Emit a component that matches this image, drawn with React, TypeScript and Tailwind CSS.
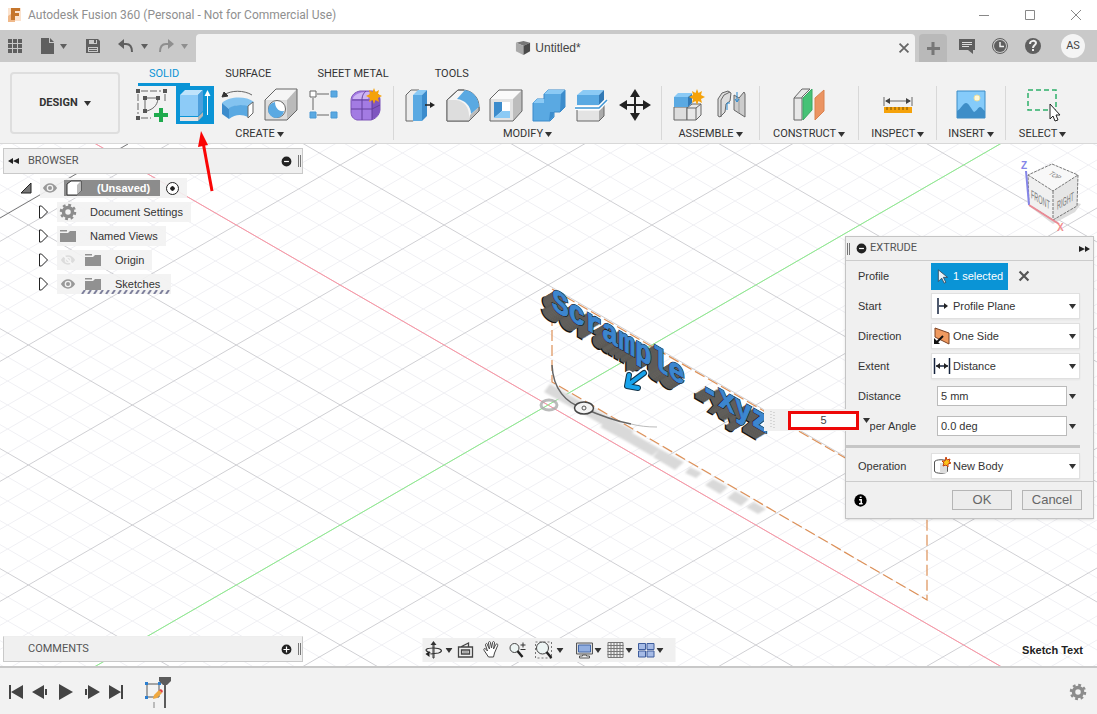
import type { ReactNode } from "react";

type IconProps = { children: ReactNode; size?: number; className?: string };

function Tool({ children }: { children: ReactNode }) {
  return (
    <svg viewBox="0 0 38 38" className="size-[38px]" fill="none" stroke="#666" strokeWidth="1">
      {children}
    </svg>
  );
}

function Glyph({ children, size = 18, className = "" }: IconProps) {
  return (
    <svg viewBox="0 0 18 18" width={size} height={size} className={`shrink-0 ${className}`} fill="none">
      {children}
    </svg>
  );
}

function Caret({ className = "text-[#333]" }: { className?: string }) {
  return (
    <svg viewBox="0 0 7 5" className={`h-[5px] w-[7px] shrink-0 ${className}`}>
      <path d="M0 0h7L3.5 5z" fill="currentColor" />
    </svg>
  );
}

const Spark = ({ x, y }: { x: number; y: number }) => (
  <path
    transform={`translate(${x} ${y})`}
    d="M0-8 1.5-4 5-6 4-2 8 0 4 2 5 6 1.5 4 0 8-1.5 4-5 6-4 2-8 0-4-2-5-6-1.5-4z"
    fill="#f5a20a"
    stroke="none"
  />
);

const createTools = [
  {
    name: "Create Sketch",
    icon: (
      <Tool>
        <path d="M8 5h20M5 8v20M32 8v9M8 32h10" strokeDasharray="7 2" />
        <path d="M13 12h10M12 13v11M25 13c-1 7-5 10-11 12" />
        <path d="M3 3h4v4H3zM30 3h4v4h-4zM3 30h4v4H3zM10 10h4v4h-4zM23 10h4v4h-4zM10 23h4v4h-4z" fill="#555" stroke="none" />
        <path d="M26 22h4v5h5v4h-5v5h-4v-5h-5v-4h5z" fill="#1faa4d" stroke="none" />
      </Tool>
    ),
  },
  {
    name: "Extrude",
    active: true,
    icon: (
      <Tool>
        <path d="M4 9l5-5h18l-5 5z" fill="#bfe3fb" stroke="none" />
        <path d="M4 9h18v21H4z" fill="#8dcbf7" stroke="none" />
        <path d="M22 9l5-5v21l-5 5z" fill="#4e9fdc" stroke="none" />
        <path d="M4 31h18v4H4z" fill="#e6e6e6" stroke="none" />
        <path d="M22 31l5-5v4l-5 5z" fill="#b5b5b5" stroke="none" />
        <path d="M31.500 29V6" stroke="#fff" />
        <path d="M28.500 10l3-6 3 6z" fill="#fff" stroke="none" />
      </Tool>
    ),
  },
  {
    name: "Revolve",
    icon: (
      <Tool>
        <path d="M5 9C12 4 25 4 33 9" />
        <path d="M3 11l2-5 4 4z" fill="#333" stroke="#333" />
        <path d="M3 17c8-7 24-7 32-1l-6 5c-7-3-14-2-19 2z" fill="#83c3f0" stroke="none" />
        <path d="M10 22c5-3 12-4 19-2v11c-6-3-13-3-19 2z" fill="#5aa9e2" stroke="none" />
        <path d="M3 17l7 6v10l-7-5z" fill="#3c8ccc" stroke="none" />
        <path d="M29 20l5-4v11l-5 5z" fill="#fff" />
      </Tool>
    ),
  },
  {
    name: "Hole",
    icon: (
      <Tool>
        <path d="M3 14L14 3h21L25 14z" fill="#f5f5f5" stroke="none" />
        <path d="M25 14L35 3v21L25 34z" fill="#bababa" stroke="none" />
        <path d="M3 14h22v20H3z" fill="#ddd" stroke="none" />
        <path d="M3 14L14 3h21v21L25 34H3z" />
        <circle cx="15" cy="23" r="8.500" fill="#fff" />
        <path d="M13 16a8 8 0 1 0 9 9c-5 1-9-3-9-9z" fill="#5aa9e2" stroke="none" />
      </Tool>
    ),
  },
  {
    name: "Rectangular Pattern",
    icon: (
      <Tool>
        <path d="M12 8h12M8 12v12M12 29h12" />
        <path d="M5 5h6v6H5z" fill="#fff" />
        <path d="M26 5h6v6h-6zM5 26h6v6H5zM26 26h6v6h-6z" fill="#5aa9e2" stroke="#4b99d4" />
      </Tool>
    ),
  },
  {
    name: "Create Form",
    icon: (
      <Tool>
        <path d="M3 15c0-6 4-9 9-10h12c5 1 8 4 8 9v10c-1 6-5 9-9 10H9c-4-1-6-4-6-8z" fill="#a37be3" stroke="#7d54b8" />
        <path d="M5 12c3-5 8-6 17-6l-2 7H5z" fill="#cdb4f4" stroke="none" />
        <path d="M24 13c3-1 5-2 8-2v13c-1 5-4 8-8 9z" fill="#7f55c0" stroke="none" />
        <path d="M3 23h21l8-4M14 34V14c0-5 2-7 4-9M4 14h20v20" stroke="#633f9c" />
        <Spark x={26} y={10} />
      </Tool>
    ),
  },
];

const modifyTools = [
  {
    name: "Press Pull",
    icon: (
      <Tool>
        <path d="M5 9l5-5h8v26l-6 5H5z" fill="#ececec" />
        <path d="M12 10l6-6v26l-6 5z" fill="#fff" stroke="none" />
        <path d="M12 9h9v26h-9z" fill="#5aa9e2" stroke="none" />
        <path d="M12 9l5-5h9l-5 5z" fill="#8bcaf5" stroke="none" />
        <path d="M21 9l5-5v26l-5 5z" fill="#3c8ccc" stroke="none" />
        <path d="M24 19h6" stroke="#222" strokeWidth="1.500" />
        <path d="M29 16l5 3-5 3z" fill="#222" stroke="none" />
      </Tool>
    ),
  },
  {
    name: "Fillet",
    icon: (
      <Tool>
        <path d="M3 14L14 4h6c9 1 15 8 15 17v4L25 35H3z" fill="#f5f5f5" />
        <path d="M3 14h9c8 1 13 7 13 16v5H3z" fill="#ddd" stroke="none" />
        <path d="M13 13l8-9c8 1 14 8 14 17l-8 7c0-8-6-14-14-15z" fill="#5aa9e2" stroke="none" />
        <path d="M26 29l9-8v4L25 35z" fill="#bbb" stroke="none" />
        <path d="M3 14L14 4h6M35 21v4L25 35H3V14" />
      </Tool>
    ),
  },
  {
    name: "Shell",
    icon: (
      <Tool>
        <path d="M3 13l9-9h23l-9 9z" fill="#fafafa" stroke="none" />
        <path d="M26 13l9-9v21L26 35z" fill="#bdbdbd" stroke="none" />
        <path d="M3 13h23v22H3z" fill="#e3e3e3" stroke="none" />
        <path d="M3 13l9-9h23v21l-9 10H3z" />
        <path d="M7 16h16v16H7z" fill="#fff" stroke="none" />
        <path d="M7 16h8v9l-8 7z" fill="#3c8ccc" stroke="none" />
        <path d="M15 25h8v7H7z" fill="#8bcaf5" stroke="none" />
      </Tool>
    ),
  },
  {
    name: "Combine",
    icon: (
      <Tool>
        <path d="M3 17l4-4h7V8l4-4h17v17l-5 5h-6v5l-4 4H3z" fill="#5aa9e2" stroke="#3b8aca" />
        <path d="M14 8l4-4h17l-4 4zM3 17l4-4h7v4z" fill="#8bcaf5" stroke="none" />
        <path d="M31 8l4-4v17l-5 5zM20 26h4l-1 5-4 4z" fill="#3c8ccc" stroke="none" />
      </Tool>
    ),
  },
  {
    name: "Split Body",
    icon: (
      <Tool>
        <path d="M4 9l6-5h21l-5 5z" fill="#8bcaf5" stroke="none" />
        <path d="M4 9h22v10H4z" fill="#5aa9e2" stroke="none" />
        <path d="M26 9l5-5v10l-5 5z" fill="#3279b5" stroke="none" />
        <path d="M4 25h22v10H4z" fill="#e3e3e3" stroke="none" />
        <path d="M26 25l5-5v10l-5 5z" fill="#aaa" stroke="none" />
        <path d="M4 24v11h22l5-5V19" />
        <path d="M2 22h24l8-8" stroke="#fff" strokeWidth="4" />
        <path d="M2 22h24l8-8" stroke="#3e95d4" strokeWidth="1.500" />
      </Tool>
    ),
  },
  {
    name: "Move",
    icon: (
      <Tool>
        <path d="M19 8v22M8 19h22" stroke="#222" strokeWidth="2" />
        <path d="M19 3l5 8H14zM19 35l5-8H14zM3 19l8-5v10zM35 19l-8-5v10z" fill="#222" stroke="none" />
      </Tool>
    ),
  },
];

const assembleTools = [
  {
    name: "New Component",
    icon: (
      <Tool>
        <path d="M4 21h13v13H4z" fill="#ddd" />
        <path d="M17 22l5-4h9v11l-5 5h-9z" fill="#e8e8e8" />
        <path d="M17 22h9v12M26 22l5-4" />
        <path d="M4 11l4-4h14v10l-5 4H4z" fill="#8bcaf5" stroke="none" />
        <path d="M4 11h14v10H4z" fill="#5aa9e2" stroke="none" />
        <path d="M18 11l4-3v9l-4 4z" fill="#3279b5" stroke="none" />
        <Spark x={27} y={11} />
      </Tool>
    ),
  },
  {
    name: "Joint",
    icon: (
      <Tool>
        <path d="M5 13l4-6 6-2 3 2-1 8-4 3-1 8-5 5-2-1z" fill="#ddd" />
        <path d="M8 31V14l3-5 6-3" />
        <path d="M21 9l5 3 5-6 1 2v23l-11-7z" fill="#ccc" />
        <path d="M26 12v15" stroke="#999" />
        <path d="M14 24v-7h3M24 6v9M22 13l2 3 2-3" stroke="#2787cf" />
      </Tool>
    ),
  },
];

const constructTools = [
  {
    name: "Offset Plane",
    icon: (
      <Tool>
        <path d="M4 12l8-9h8l-8 8v23H4z" fill="#e8e8e8" />
        <path d="M4 12h8" />
        <path d="M13 12l9-9v21l-9 10z" fill="#46c276" stroke="#39a862" />
        <path d="M25 12l9-8v21l-9 9z" fill="#eb9462" stroke="#d9824f" />
      </Tool>
    ),
  },
];

const inspectTools = [
  {
    name: "Measure",
    icon: (
      <Tool>
        <path d="M5 11v9M33 11v9M7 15h24" />
        <path d="M6 15l5-3v6zM32 15l-5-3v6z" fill="#444" stroke="none" />
        <path d="M5 21h28v6H5z" fill="#f5a20a" stroke="none" />
        <path d="M8 21v3M12 21v3M16 21v3M20 21v3M24 21v3M28 21v3" stroke="#7a5300" />
      </Tool>
    ),
  },
];

const insertTools = [
  {
    name: "Insert Image",
    icon: (
      <Tool>
        <path d="M5 5h28v27H5z" fill="#85cbfa" stroke="#3d8cc5" />
        <path d="M5 25c4-2 6-8 9-8s5 6 8 9c3-1 4-5 6-5s3 3 5 4v7H5z" fill="#3e8ec8" stroke="none" />
        <circle cx="25" cy="12" r="3" fill="#fff8d8" stroke="#e9dfa0" />
      </Tool>
    ),
  },
];

const selectTools = [
  {
    name: "Select",
    icon: (
      <Tool>
        <path d="M4 4h28v20H4z" stroke="#2eb06a" strokeDasharray="5 3" strokeWidth="1.500" />
        <path d="M26 18v15l3-3 2 5 3-1-2-5h4z" fill="#fff" stroke="#222" />
      </Tool>
    ),
  },
];

const groups = [
  { label: "CREATE", tools: createTools, pad: "px-[7px]" },
  { label: "MODIFY", tools: modifyTools, pad: "px-[7px]" },
  { label: "ASSEMBLE", tools: assembleTools, pad: "px-2" },
  { label: "CONSTRUCT", tools: constructTools, pad: "px-[13px]" },
  { label: "INSPECT", tools: inspectTools, pad: "px-[12px]" },
  { label: "INSERT", tools: insertTools, pad: "px-[11px]" },
  { label: "SELECT", tools: selectTools, pad: "px-[13px]" },
];

function TitleBar() {
  return (
    <header className="flex h-[30px] items-center bg-white pl-[7px]">
      <svg viewBox="0 0 16 16" className="size-4">
        <path d="M1 1h13v13H1z" fill="#fbe3cf" />
        <path d="M4 1h9v3H8v2h4v3H8v4H4z" fill="#c5752b" />
        <path d="M1 9l3-2v6h4v2H1z" fill="#f0b98a" />
      </svg>
      <h1 className="ml-[5px] flex-1 font-['Roboto',sans-serif] text-[12px] text-[#8f8f8f]">
        Autodesk Fusion 360 (Personal - Not for Commercial Use)
      </h1>
      <div className="flex gap-[28px] pr-3">
        <button aria-label="Minimize">
          <Glyph><path d="M4 9.500h10" stroke="#888" /></Glyph>
        </button>
        <button aria-label="Maximize">
          <Glyph><path d="M4.500 4.500h9v9h-9z" stroke="#888" /></Glyph>
        </button>
        <button aria-label="Close">
          <Glyph><path d="M4 4l10 10M14 4L4 14" stroke="#888" /></Glyph>
        </button>
      </div>
    </header>
  );
}

function DocumentBar() {
  return (
    <div className="flex h-8 bg-[#c9c9c9] text-[#5f5f5f]">
      <div className="flex w-[196px] shrink-0 items-center pl-[6px]">
        <button aria-label="Data panel">
          <Glyph>
            <path
              d="M2 2h4v4H2zM7 2h4v4H7zM12 2h4v4h-4zM2 7h4v4H2zM7 7h4v4H7zM12 7h4v4h-4zM2 12h4v4H2zM7 12h4v4H7zM12 12h4v4h-4z"
              fill="currentColor"
            />
          </Glyph>
        </button>
        <button aria-label="File" className="ml-[14px] flex items-center gap-1">
          <Glyph><path d="M3 1h8v5h5v11H3zM12 1l4 4h-4z" fill="currentColor" /></Glyph>
          <Caret className="text-[#5f5f5f]" />
        </button>
        <button aria-label="Save" className="ml-[17px]">
          <Glyph>
            <path d="M2 2h12l2 2v12H2zM5 3v4h8V3zM4 10v5h10v-5z" fillRule="evenodd" fill="currentColor" />
            <path d="M10 3h2v3h-2zM5 11h8v1H5zM5 13h8v1H5z" fill="currentColor" />
          </Glyph>
        </button>
        <button aria-label="Undo" className="ml-[15px] flex items-center gap-[6px]">
          <Glyph>
            <path d="M5 7h4c4 0 6 3 6 8" stroke="currentColor" strokeWidth="2" />
            <path d="M7 2v10L1 7z" fill="currentColor" />
          </Glyph>
          <Caret className="text-[#5f5f5f]" />
        </button>
        <button aria-label="Redo" className="ml-[9px] flex items-center gap-[6px] text-[#8f8f8f]">
          <Glyph>
            <path d="M13 7H9c-4 0-6 3-6 8" stroke="currentColor" strokeWidth="2" />
            <path d="M11 2v10l6-5z" fill="currentColor" />
          </Glyph>
          <Caret className="text-[#8f8f8f]" />
        </button>
      </div>
      <div className="mt-1 flex min-w-0 flex-1 items-center rounded-t bg-[#f2f2f2] pr-[3px]">
        <div className="flex flex-1 items-center justify-center gap-1 pl-1 text-xs text-[#444]">
          <svg viewBox="0 0 17 17" className="size-4">
            <path d="M1 3l8-2 7 2-7 3z" fill="#777" />
            <path d="M1 3l8 3v10l-8-4z" fill="#aaa" />
            <path d="M16 3L9 6v10l7-4z" fill="#4a4a4a" />
          </svg>
          Untitled*
        </div>
        <button aria-label="Close tab">
          <Glyph size={16}><path d="M4 4l10 10M14 4L4 14" stroke="#666" strokeWidth="2" /></Glyph>
        </button>
      </div>
      <div className="flex w-[182px] shrink-0 items-center">
        <button aria-label="New tab" className="mt-1 ml-1 flex h-7 w-7 items-center justify-center rounded-t bg-[#b9b9b9]">
          <Glyph><path d="M9 3v13M3 9.500h13" stroke="#777" strokeWidth="3" /></Glyph>
        </button>
        <button aria-label="Comments" className="ml-[11px]">
          <Glyph>
            <path d="M1 2h16v11h-2v4l-5-4H1z" fill="currentColor" />
            <path d="M4 5.500h10M4 7.500h10M4 9.500h7" stroke="#ddd" />
          </Glyph>
        </button>
        <button aria-label="Job status" className="ml-[15px]">
          <Glyph>
            <circle cx="9" cy="9" r="7.500" stroke="currentColor" />
            <circle cx="9" cy="9" r="6" fill="currentColor" />
            <path d="M9 5v4.500h4" stroke="#eee" strokeWidth="1.500" />
          </Glyph>
        </button>
        <button aria-label="Help" className="ml-[15px]">
          <Glyph>
            <circle cx="9" cy="9" r="8" fill="currentColor" />
            <path d="M6 7c0-4 6-4 6-1 0 2-3 2-3 5" stroke="#eee" strokeWidth="2" />
            <path d="M8 12h2v2H8z" fill="#eee" />
          </Glyph>
        </button>
        <button className="ml-[19px] size-6 rounded-full bg-[#f4f4f4] font-['Roboto',sans-serif] text-[11px] text-[#444]">
          AS
        </button>
      </div>
    </div>
  );
}

function Ribbon() {
  return (
    <div className="flex h-[82px] border-b border-[#d8d8d8] bg-[#f2f2f2] font-['Roboto',sans-serif] text-[11px] text-[#333]">
      <div className="w-[126px] shrink-0 pt-[10px] pl-[10px]">
        <button className="flex h-[62px] w-[110px] items-center justify-center gap-[6px] rounded border-2 border-[#dedede] font-bold">
          DESIGN <Caret />
        </button>
      </div>
      <div className="min-w-0 flex-1">
        <nav className="flex h-6 gap-6 pl-3">
          <a href="#solid" className="border-b-3 border-[#0a94d6] px-[11px] leading-6 text-[#0a94d6]">SOLID</a>
          <a href="#surface" className="px-[11px] leading-6">SURFACE</a>
          <a href="#sheet-metal" className="px-[11px] leading-6">SHEET METAL</a>
          <a href="#tools" className="px-[11px] leading-6">TOOLS</a>
        </nav>
        <div className="flex">
          {groups.map((group) => (
            <div
              key={group.label}
              className={`flex h-[54px] shrink-0 flex-col items-center border-r border-[#d8d8d8] last:border-r-0 ${group.pad}`}
            >
              <div className="flex gap-[5px]">
                {group.tools.map((tool) => (
                  <button
                    key={tool.name}
                    aria-label={tool.name}
                    className={"active" in tool && tool.active ? "bg-[#0a94d6]" : ""}
                  >
                    {tool.icon}
                  </button>
                ))}
              </div>
              <button className="mt-[2px] flex items-center gap-[2px] leading-4">
                {group.label} <Caret />
              </button>
            </div>
          ))}
        </div>
      </div>
    </div>
  );
}

// Isometric floor grid: both families of lines share one slope around the origin.
const SLOPE = 0.5774;
const ORIGIN = { x: 548, y: 405 };
const steps = Array.from({ length: 69 }, (_, i) => i - 34).sort(
  (a, b) => Number(a % 5 === 0) - Number(b % 5 === 0),
);

function gridLine(k: number, dir: number) {
  const y = (x: number) => ORIGIN.y + dir * SLOPE * (x - ORIGIN.x) + 24 * k;
  return `M0 ${y(0)}L1097 ${y(1097)}`;
}

function Viewport() {
  return (
    <svg viewBox="0 144 1097 522" preserveAspectRatio="xMidYMid slice" className="absolute inset-0 h-full w-full" fill="none">
      {steps.map((k) => (
        <path key={k} d={gridLine(k, 1) + gridLine(k, -1)} stroke={k % 5 === 0 ? "#d0d0d4" : "#f0f0f4"} />
      ))}
      <path d="M0 218L128 144" stroke="#777" />
      <path d={gridLine(0, 1)} stroke="#ff93a3" />
      <path d={gridLine(0, -1)} stroke="#8cf08c" />

      <defs>
        <filter id="soft"><feGaussianBlur stdDeviation="1" /></filter>
        <text
          id="solid-text"
          transform="matrix(.866 .5 0 1 552 309)"
          fontFamily="Liberation Mono, monospace"
          fontWeight="bold"
          fontSize="32"
        >
          Scrample -xyz
        </text>
      </defs>

      <g filter="url(#soft)" fill="#d9d9d9">
        <path d="M550 384l84 47-8 7-82-46z" />
        <path d="M608 420l26 14-8 7-26-14zM634 434l26 15-8 7-26-15zM660 449l24 13-9 8-22-13zM690 467l12 6-6 5-11-5zM713 479l15 8-8 7-15-9zM735 491l14 8-8 7-14-8zM754 502l12 7-8 5-12-7z" />
      </g>
      <ellipse cx="549" cy="405" rx="8" ry="5" stroke="#aaa" strokeWidth="3" opacity=".8" />

      <g stroke="#dd9057" strokeWidth="1.200" strokeDasharray="11 4">
        <path d="M552 289L927 505M552 300V382L927 600V505" />
      </g>

      {Array.from({ length: 12 }, (_, i) => (
        <use
          key={i}
          href="#solid-text"
          x={i - 11}
          y={(11 - i) * 0.6}
          fill="#6c6a66"
          stroke={i === 0 || i === 11 ? "#151515" : "#5a5854"}
          strokeWidth={i === 0 || i === 11 ? 2 : 1}
        />
      ))}
      <use href="#solid-text" fill="#3c86cf" stroke="#3c86cf" strokeWidth="1" />

      <path d="M552 365c1 24 14 38 31 43 16 7 32 13 48 16" stroke="#666" strokeWidth="1.500" />
      <path d="M631 424c8 2 16 3 26 3" stroke="#bbb" />
      <ellipse cx="584" cy="408" rx="9.500" ry="6" fill="#f3f3f3" stroke="#444" strokeWidth="1.500" />
      <circle cx="584" cy="408" r="2" stroke="#555" />
      <g strokeLinecap="round" strokeLinejoin="round">
        <path d="M644 373l-16 12M629 375l-2 11 11 2" stroke="#fff" strokeWidth="9" />
        <path d="M644 373l-16 12M629 375l-2 11 11 2" stroke="#11344a" strokeWidth="6" />
        <path d="M644 373l-16 12M629 375l-2 11 11 2" stroke="#17a3ec" strokeWidth="4" />
      </g>
    </svg>
  );
}

function ViewCube() {
  return (
    <svg viewBox="1012 154 77 78" className="absolute top-2.5 right-2 h-[78px] w-[77px]" fontFamily="Liberation Sans, sans-serif">
      <path d="M1029 206l24 18 22-12 6-8-28-8z" fill="#ddd" />
      <path d="M1052 164l26 11-25 16-25-16z" fill="#f8f8f8" />
      <path d="M1028 175l25 16v29l-24-15z" fill="#f0f0f0" />
      <path d="M1078 175l-25 16v29l24-14z" fill="#e6e6e6" />
      <path d="M1052 164l26 11-1 31-24 14-24-15-1-30zM1028 175l25 16 25-16M1053 191v29" fill="none" stroke="#777" strokeDasharray="3 1" />
      <path d="M1026 171l3 34" stroke="#8585e8" strokeWidth="2" />
      <path d="M1029 205l30 19" stroke="#ea8a95" strokeWidth="2" />
      <text x="1021" y="169" fontSize="10" fontWeight="bold" fill="#8585e8">Z</text>
      <text x="1057" y="231" fontSize="10" fontWeight="bold" fill="#f28d8d">X</text>
      <g fontSize="8" fill="#777">
        <text transform="matrix(.68 .42 0 1.500 1031 198)">FRONT</text>
        <text transform="matrix(.68 -.4 0 1.500 1057 210)">RIGHT</text>
        <text transform="matrix(.6 .35 -.8 .5 1048 174)">TOP</text>
      </g>
    </svg>
  );
}

function Eye({ off = false }: { off?: boolean }) {
  return (
    <Glyph size={16} className={off ? "opacity-25" : ""}>
      <path d="M1 9c4-7 12-7 16 0-4 7-12 7-16 0z" fill="#999" />
      <circle cx="9" cy="9" r="3" stroke="#f2f2f2" strokeWidth="1.500" />
      {off && <path d="M3 3l12 12" stroke="#fff" strokeWidth="2" />}
    </Glyph>
  );
}

const Folder = () => (
  <Glyph><path d="M1 3h7v1.500H1zM1 6h8l2-2h6v11H1z" fill="#919191" /></Glyph>
);

const Gear = () => (
  <Glyph>
    <circle cx="9" cy="9" r="4.500" stroke="#8c8c8c" strokeWidth="3.500" />
    <circle cx="9" cy="9" r="7" stroke="#8c8c8c" strokeWidth="2.500" strokeDasharray="2.800 2.700" />
  </Glyph>
);

const Expander = () => (
  <button aria-label="Expand" className="mr-[8px]">
    <svg viewBox="0 0 11 14" className="h-[14px] w-[11px]">
      <path d="M1.500 1h2l6 6-6 6h-2z" fill="#fff" stroke="#222" />
    </svg>
  </button>
);

function Browser() {
  return (
    <section className="absolute top-1 left-[3px] w-[300px] text-[11px] text-[#333]">
      <div className="flex h-[26px] items-center border border-[#c9c9c9] bg-[#f0f0f0] pr-px pl-1 font-['Roboto',sans-serif] text-[#555]">
        <button aria-label="Collapse browser">
          <svg viewBox="0 0 11 8" className="h-2 w-[11px]"><path d="M5 1v6L0 4zM11 1v6L5 4z" fill="#222" /></svg>
        </button>
        <h2 className="ml-[9px] flex-1">BROWSER</h2>
        <button aria-label="Minimize browser" className="mr-[6px]">
          <Glyph size={11}><circle cx="9" cy="9" r="8" fill="#222" /><path d="M5 9h8" stroke="#fff" strokeWidth="2" /></Glyph>
        </button>
        <span className="h-3 w-[3px] border-x border-[#777]" />
      </div>
      <ul className="pt-[2px]">
        <li className="flex h-6 items-center pl-[17px]">
          <svg viewBox="0 0 12 12" className="mr-[8px] size-3"><path d="M11 1v10H1z" fill="#777" stroke="#222" /></svg>
          <div className="flex h-5 items-center gap-[6px] bg-[#f2f2f2]/90 pr-2 pl-[2px]">
            <Eye />
            <span className="flex h-4 items-center bg-[#8c8c8c] pr-[10px] font-bold text-white">
              <svg viewBox="0 0 18 16" className="mr-[15px] h-4 w-[18px]">
                <path d="M3 4l4-3h10v10l-4 4H3z" fill="#fff" stroke="#333" />
                <path d="M13 5l4-4v10l-4 4z" fill="#bbb" />
              </svg>
              (Unsaved)
            </span>
            <input type="radio" aria-label="Activate component" defaultChecked className="size-[13px] appearance-none rounded-full border border-[#222] bg-[radial-gradient(circle,#222_25%,#fff_32%)]" />
          </div>
        </li>
        <li className="flex h-6 items-center pl-[35px]">
          <Expander />
          <div className="flex h-5 items-center gap-[13px] bg-[#f2f2f2]/90 pr-[8px] pl-[2px]"><Gear />Document Settings</div>
        </li>
        <li className="flex h-6 items-center pl-[35px]">
          <Expander />
          <div className="flex h-5 items-center gap-[13px] bg-[#f2f2f2]/90 pr-[8px] pl-[2px]"><Folder />Named Views</div>
        </li>
        <li className="flex h-6 items-center pl-[35px]">
          <Expander />
          <div className="flex h-5 items-center bg-[#f2f2f2]/90 pr-[8px] pl-[3px]">
            <Eye off />
            <span className="ml-[8px] flex items-center gap-[13px]"><Folder />Origin</span>
          </div>
        </li>
        <li className="flex h-6 items-center pl-[35px]">
          <Expander />
          <div className="relative flex h-5 items-center bg-[#f2f2f2]/90 pr-[11px] pl-[3px]">
            <Eye />
            <span className="ml-[8px] flex items-center gap-[13px]"><Folder />Sketches</span>
            <svg className="absolute bottom-0 left-[24px] h-1 w-[90px]">
              {Array.from({ length: 15 }, (_, i) => (
                <path key={i} d={`M${i * 6 + 1} 4l3-4`} stroke="#7d7f9b" strokeWidth="2" />
              ))}
            </svg>
          </div>
        </li>
      </ul>
    </section>
  );
}

function Comments() {
  return (
    <section className="absolute bottom-1 left-[3px] flex h-[26px] w-[300px] items-center border border-[#c9c9c9] border-t-[#eee] bg-[#f0f0f0] pr-px pl-6 font-['Roboto',sans-serif] text-[11px] text-[#555]">
      <h2 className="flex-1">COMMENTS</h2>
      <button aria-label="Add comment" className="mr-[6px]">
        <Glyph size={11}>
          <circle cx="9" cy="9" r="8" fill="#222" />
          <path d="M4 9h10M9 4v10" stroke="#fff" strokeWidth="2" />
        </Glyph>
      </button>
      <span className="h-3 w-[3px] border-x border-[#777]" />
    </section>
  );
}

function NavBar() {
  return (
    <div className="absolute bottom-1 left-1/2 flex h-6 w-[253px] -translate-x-1/2 items-center bg-[#f0f0f0] pl-[2px]">
      <button aria-label="Orbit" className="flex items-center gap-[3px]">
        <Glyph>
          <path d="M8.500 3h1v14h-1z" fill="#fff" stroke="#333" />
          <path d="M9 0l3 4H6z" fill="#333" />
          <path d="M6 12c-8-3-4-5 3-5s11 3 5 5l-8 1" stroke="#333" strokeWidth="1.200" />
          <path d="M5 10v6l-4-3z" fill="#222" />
        </Glyph>
        <Caret />
      </button>
      <button aria-label="Look at" className="ml-[4px]">
        <Glyph>
          <path d="M2 6h14v10H2zM4 6l8-4v4M5 9h8v4H5z" stroke="#444" strokeWidth="1.300" />
          <path d="M6 10h6v2H6z" fill="#aaa" />
        </Glyph>
      </button>
      <button aria-label="Pan" className="ml-[8px]">
        <Glyph>
          <path
            d="M6 16L2 10c-2-3 1-3 2-1l1 1-2-6c0-2 2-2 2 0l2 4-1-6c0-2 2-2 2 0l1 5 1-5c0-2 2-2 2 0l-1 6 2-4c1-2 3-1 2 1l-3 7-1 4z"
            fill="#fff"
            stroke="#444"
          />
        </Glyph>
      </button>
      <button aria-label="Zoom" className="ml-[8px]">
        <Glyph>
          <circle cx="6" cy="7" r="4.500" fill="#edf5f4" stroke="#444" />
          <path d="M9 10l5 6" stroke="#222" strokeWidth="2.500" />
          <path d="M12 4h5M14.500 1.500v5M12 8.500h5" stroke="#333" />
        </Glyph>
      </button>
      <button aria-label="Fit" className="ml-[8px] flex items-center gap-1">
        <Glyph>
          <path d="M1 1h16v16H1z" stroke="#777" strokeDasharray="2 2" />
          <circle cx="8" cy="7" r="6" fill="#edf5f4" stroke="#444" />
          <path d="M12 11l5 6" stroke="#222" strokeWidth="2.500" />
        </Glyph>
        <Caret />
      </button>
      <button aria-label="Display settings" className="ml-[12px] flex items-center gap-px">
        <Glyph>
          <path d="M1 2h16v11H1z" fill="#ddd" stroke="#555" />
          <path d="M3 4h12v7H3z" fill="#91aee0" stroke="#4267a8" />
          <path d="M7 14h4v1h3v2H4v-2h3z" fill="#eee" stroke="#555" />
        </Glyph>
        <Caret />
      </button>
      <button aria-label="Grid and snaps" className="ml-[5px] flex items-center gap-px">
        <Glyph>
          <path d="M1.500 1.500h15v15h-15zM4.500 1v16M7.500 1v16M10.500 1v16M13.500 1v16M1 4.500h16M1 7.500h16M1 10.500h16M1 13.500h16" fill="#eee" stroke="#777" />
        </Glyph>
        <Caret />
      </button>
      <button aria-label="Viewports" className="ml-[5px] flex items-center gap-px">
        <Glyph>
          <path d="M1 2.500h7v6H1zM9.500 2.500h7v6h-7zM1 10h7v6H1zM9.500 10h7v6h-7z" fill="#a6bbe6" stroke="#3f5d9c" />
        </Glyph>
        <Caret />
      </button>
    </div>
  );
}

const labelClass = "w-[73px] shrink-0 text-[11px]";

function SelectRow({ id, label, value, icon }: { id: string; label: string; value: string; icon: ReactNode }) {
  return (
    <div className="flex h-[30px] items-center">
      <label htmlFor={id} className={labelClass}>{label}</label>
      <div className="relative w-[149px]">
        <select
          id={id}
          className="h-[26px] w-full appearance-none border border-[#e0e0e0] bg-white pl-[21px] text-[11px] shadow-xs"
        >
          <option>{value}</option>
        </select>
        <span className="pointer-events-none absolute inset-y-0 left-[2px] flex items-center">{icon}</span>
        <span className="pointer-events-none absolute inset-y-0 right-1 flex items-center"><Caret /></span>
      </div>
    </div>
  );
}

function InputRow({ id, label, value }: { id: string; label: string; value: string }) {
  return (
    <div className="flex h-[30px] items-center">
      <label htmlFor={id} className={labelClass}>{label}</label>
      <input id={id} defaultValue={value} className="ml-[6px] h-5 w-[130px] border border-[#bbb] bg-white px-[3px] text-[11px]" />
      <span className="ml-[2px]"><Caret /></span>
    </div>
  );
}

function ExtrudeDialog() {
  return (
    <form className="absolute top-[92px] right-[3px] w-[249px] border border-[#c4c4c4] bg-[#f0f0f0] text-[11px] text-[#333] shadow-sm">
      <div className="flex h-[24px] items-center border-b border-[#ccc] pr-[3px] pl-px font-['Roboto',sans-serif] text-[#555]">
        <span className="mr-[6px] h-3 w-[3px] border-x border-[#777]" />
        <button type="button" aria-label="Collapse">
          <Glyph size={11}><circle cx="9" cy="9" r="8" fill="#222" /><path d="M5 9h8" stroke="#fff" strokeWidth="2" /></Glyph>
        </button>
        <h2 className="ml-[3px] flex-1">EXTRUDE</h2>
        <svg viewBox="0 0 11 8" className="h-2 w-[11px]"><path d="M0 1v6l6-3zM6 1v6l5-3z" fill="#222" /></svg>
      </div>
      <div className="pl-[12px]">
        <div className="flex h-[30px] items-center">
          <span className={labelClass}>Profile</span>
          <button type="button" className="flex h-[27px] w-[77px] items-center gap-[3px] bg-[#0a94d6] pl-[4px] text-white">
            <Glyph size={15}><path d="M4 1v14l4-4 3 6 2-1-3-6h5z" fill="#e9f3fa" stroke="#345" /></Glyph>
            1 selected
          </button>
          <button type="button" aria-label="Clear selection" className="ml-2">
            <Glyph size={16}><path d="M4 4l10 10M14 4L4 14" stroke="#555" strokeWidth="2.500" /></Glyph>
          </button>
        </div>
        <SelectRow
          id="start"
          label="Start"
          value="Profile Plane"
          icon={
            <Glyph>
              <path d="M5 1v16M6 9h6" stroke="#16243f" strokeWidth="1.500" />
              <path d="M11 6l4 3-4 3z" fill="#222" />
            </Glyph>
          }
        />
        <SelectRow
          id="direction"
          label="Direction"
          value="One Side"
          icon={
            <Glyph>
              <path d="M2 1l14 5v11L2 10z" fill="#f09a5f" stroke="#7c4223" />
              <path d="M10 9l-7 7" stroke="#111" strokeWidth="2" />
              <path d="M1 11l6 6H1z" fill="#111" />
            </Glyph>
          }
        />
        <SelectRow
          id="extent"
          label="Extent"
          value="Distance"
          icon={
            <Glyph>
              <path d="M1.500 1v16M16.500 1v16M3 9h12" stroke="#16243f" strokeWidth="1.500" />
              <path d="M3 9l4-3v6zM15 9l-4-3v6z" fill="#222" />
            </Glyph>
          }
        />
        <InputRow id="distance" label="Distance" value="5 mm" />
        <InputRow id="taper" label="Taper Angle" value="0.0 deg" />
      </div>
      <hr className="mt-1 mr-[13px] mb-[3px] border-t-3 border-[#c6c6c6]" />
      <div className="border-b border-[#ccc] pl-[12px]">
        <SelectRow
          id="operation"
          label="Operation"
          value="New Body"
          icon={
            <Glyph>
              <path d="M1.500 5c0-3 13-3 13 0v9c0 3-13 3-13 0z" fill="#fff" stroke="#555" />
              <path d="M7 6h7v10H7z" fill="#ddd" />
              <path d="M13 0l1 3 3-1-1 3 2 1-3 1v3l-2-2-3 1 1-3-2-2h3z" fill="#fcc419" stroke="#c43c0b" />
            </Glyph>
          }
        />
      </div>
      <div className="flex h-[36px] items-center pr-[11px] pl-[8px]">
        <Glyph size={13}>
          <circle cx="9" cy="9" r="8.500" fill="#000" />
          <path d="M7 8h3v5M7 13.500h5M8 4.500h2.500" stroke="#fff" strokeWidth="2" />
        </Glyph>
        <div className="flex flex-1 justify-end gap-[10px] text-[13px] text-[#666]">
          <button type="button" className="h-5 w-[60px] border border-[#b5b5b5] bg-[#ececec] leading-[18px]">OK</button>
          <button type="button" className="h-5 w-[60px] border border-[#b5b5b5] bg-[#ececec] leading-[18px]">Cancel</button>
        </div>
      </div>
    </form>
  );
}

function DistanceField() {
  return (
    <div className="absolute top-[265px] right-[227px] flex h-[22px] w-[106px] items-center bg-[#f0f0f0] pl-[6px]">
      <svg className="h-[18px] w-[5px]">
        <path d="M1 0v18M4 1v17" stroke="#bbb" strokeDasharray="1 2" />
      </svg>
      <input
        aria-label="Extrude distance"
        defaultValue="5"
        className="ml-[13px] h-[19px] w-[71px] border-3 border-[#ee0808] bg-white text-center text-[11px] text-[#444]"
      />
      <span className="ml-1"><Caret /></span>
    </div>
  );
}

const playback = [
  { name: "Go to start", d: "M2 2h2v14H2zM16 2v14L4 9z" },
  { name: "Step back", d: "M12 2v14L0 9zM13 6h2v6h-2z" },
  { name: "Play", d: "M2 1v16l14-8z" },
  { name: "Step forward", d: "M6 2v14l12-7zM3 6h2v6H3z" },
  { name: "Go to end", d: "M14 2h2v14h-2zM2 2v14l12-7z" },
];

function Timeline() {
  return (
    <footer className="flex h-12 items-center border-t-2 border-[#c8c8c8] bg-[#f2f2f2] pt-px pr-[10px] pl-[7px]">
      <div className="flex gap-[7px]">
        {playback.map((item) => (
          <button key={item.name} aria-label={item.name}>
            <Glyph><path d={item.d} fill="#444" /></Glyph>
          </button>
        ))}
      </div>
      <svg viewBox="0 0 30 34" className="ml-[18px] h-[34px] w-[30px]">
        <path d="M4 9h12v13H4z" fill="none" stroke="#555" />
        <path d="M2 7h3v3H2zM15 7h3v3h-3zM2 21h3v3H2z" fill="#2b7ed0" />
        <path d="M10 24l1-4 5-5 3 3-5 5z" fill="#f0a83f" />
        <path d="M16 15l2-1 2 2-1 2z" fill="#e04444" />
        <path d="M11 27v6" stroke="#bbb" strokeWidth="2" />
        <path d="M16 2h12v4l-4 4h-4l-4-4z" fill="#5b5b5b" />
        <path d="M22 8v25" stroke="#5b5b5b" strokeWidth="2" />
      </svg>
      <button aria-label="Timeline settings" className="ml-auto"><Gear /></button>
    </footer>
  );
}

export default function App() {
  return (
    <div className="relative flex h-screen flex-col overflow-hidden bg-white font-['Liberation_Sans',Arial,sans-serif]">
      <TitleBar />
      <DocumentBar />
      <Ribbon />
      <main className="relative min-h-0 flex-1 overflow-hidden">
        <Viewport />
        <ViewCube />
        <Browser />
        <Comments />
        <NavBar />
        <ExtrudeDialog />
        <DistanceField />
        <p className="absolute right-[14px] bottom-2 text-[11px] font-bold text-[#222]">Sketch Text</p>
      </main>
      <Timeline />
      <svg viewBox="0 0 22 64" className="pointer-events-none absolute top-[130px] left-[196px] h-16 w-[22px]">
        <path d="M16 61L7 12" stroke="#fa0505" strokeWidth="3" />
        <path d="M5 1l7 14-10 2z" fill="#fa0505" />
      </svg>
    </div>
  );
}
